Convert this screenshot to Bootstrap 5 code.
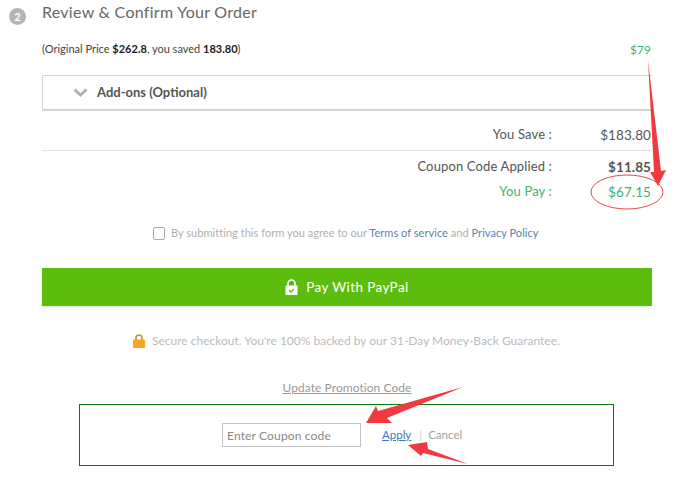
<!DOCTYPE html>
<html lang="en">
<head>
    <meta charset="UTF-8">
    <meta name="viewport" content="width=device-width, initial-scale=1.0">
    <title>Review &amp; Confirm Your Order</title>
    <link href="https://cdn.jsdelivr.net/npm/bootstrap@5.3.3/dist/css/bootstrap.min.css" rel="stylesheet">
    <style>
        body {
            font-family: Lato, "Open Sans", sans-serif;
            background: #fff;
            color: #444;
            overflow: hidden;
            position: relative;
            height: 482px;
        }
        .order-wrap { width: 652px; padding-left: 42px; }
        .step-head { height: 30px; font-size: 16px; letter-spacing: .28px; color: #666; }
        .step-num {
            position: absolute; left: 9px; top: 8px; width: 17px; height: 17px;
            border-radius: 50%; background: #b5b5b5; color: #fff;
            font-size: 11px; font-weight: 700; line-height: 17px; text-align: center;
        }
        .price-note { height: 45px; padding-top: 11px; font-size: 11px; color: #444; }
        .price-note b { color: #222; }
        .price-old { color: #3cb371; font-size: 12px; padding-right: 1px; }
        .addons-box {
            height: 36px; border: 1px solid #d4d4d4; border-bottom-width: 2px; border-right-width: 0;
            padding-left: 30px; gap: 9px; font-size: 13px; font-weight: 700; color: #555;
        }
        .sum-row { font-size: 13px; color: #555; }
        .sum-label { width: 510px; text-align: right; letter-spacing: .14px; }
        .sum-val { width: 99px; text-align: right; font-size: 13.5px; letter-spacing: .1px; }
        .sum-first { height: 40px; padding-top: 14px; border-bottom: 1px solid #e3e3e3; }
        .sum-mid { height: 31px; padding-top: 6px; }
        .sum-last { height: 25px; color: #3cb371; }
        .agree-row { margin-top: 18px; height: 16px; gap: 6px; padding-left: 111px; font-size: 11px; color: #b0b0b0; letter-spacing: .04px; }
        .agree-box { width: 12px; height: 13px; border: 1px solid #aaa; border-radius: 2px; }
        .agree-row a { color: #5a83b0; text-decoration: none; }
        .pay-btn {
            display: block; width: 610px; height: 38px; margin-top: 27px; padding: 0;
            background: #5cbd0f; border: 0; border-radius: 0; color: #fff;
            font-size: 13.5px; font-weight: 400; letter-spacing: .4px;
            box-shadow: 0 1px 2px rgba(0,0,0,.12);
        }
        .pay-btn:hover { background: #5cbd0f; color: #fff; }
        .secure-row { margin-top: 26px; height: 18px; gap: 7px; padding-left: 91px; font-size: 12px; color: #bbb; }
        .promo-link { margin-top: 29px; height: 18px; text-align: center; font-size: 12px; letter-spacing: .05px; }
        .promo-link a { color: #999; }
        .coupon-box { margin: 7px 0 0 37px; width: 535px; height: 62px; border: 1px solid #0a7a0a; padding-left: 142px; font-size: 11.5px; }
        .coupon-input {
            width: 139px; height: 24px; border: 1px solid #c4c4c4; border-radius: 0; padding: 0 4px;
            font-size: 12px; letter-spacing: .15px; font-family: inherit; color: #888;
        }
        .coupon-input::placeholder { color: #888; opacity: 1; }
        .apply-link { margin-left: 21px; color: #3a78c2; }
        .link-sep { margin: 0 6px 0 8px; color: #ccc; }
        .cancel-link { color: #a0a0a0; text-decoration: none; }
        .mark-layer { position: absolute; left: 0; top: 0; pointer-events: none; }
    </style>
</head>
<body>
    <span class="step-num">2</span>
    <div class="order-wrap">
        <div class="step-head">Review &amp; Confirm Your Order</div>
        <div class="price-note d-flex justify-content-between align-items-start">
            <span>(Original Price <b>$262.8</b>, you saved <b>183.80</b>)</span>
            <span class="price-old">$79</span>
        </div>
        <div class="addons-box d-flex align-items-center">
            <svg width="15" height="9" viewBox="0 0 15 9"><path d="M1.500 1.500 7.500 7 13.500 1.500" fill="none" stroke="#b0b0b0" stroke-width="3"/></svg>
            <span>Add-ons (Optional)</span>
        </div>
        <div class="sum-row sum-first d-flex"><span class="sum-label">You Save :</span><span class="sum-val">$183.80</span></div>
        <div class="sum-row sum-mid d-flex"><span class="sum-label">Coupon Code Applied :</span><span class="sum-val"><b>$11.85</b></span></div>
        <div class="sum-row sum-last d-flex"><span class="sum-label">You Pay :</span><span class="sum-val">$67.15</span></div>
        <div class="agree-row d-flex align-items-center">
            <span class="agree-box"></span>
            <span>By submitting this form you agree to our <a href="#">Terms of service</a> and <a href="#">Privacy Policy</a></span>
        </div>
        <button type="button" class="btn pay-btn">
            <svg width="13" height="16" viewBox="0 0 13 16" class="me-1 align-text-bottom"><path d="M3 7V4.500a3.500 3.500 0 0 1 7 0V7" fill="none" stroke="#fff" stroke-width="1.6"/><rect x="0.5" y="6.500" width="12" height="9.500" fill="#fff"/><path d="M4 11l2 2 3-3" fill="none" stroke="#5cbd0f" stroke-width="1.3"/></svg>
            Pay With PayPal
        </button>
        <div class="secure-row d-flex align-items-center">
            <svg width="12" height="14" viewBox="0 0 12 14"><path d="M3 6V4a3 3 0 0 1 6 0v2" fill="none" stroke="#c9902a" stroke-width="1.6"/><rect y="5.500" width="12" height="8.500" rx="1" fill="#f5a623"/></svg>
            <span>Secure checkout. You're 100% backed by our 31-Day Money-Back Guarantee.</span>
        </div>
        <div class="promo-link"><a href="#">Update Promotion Code</a></div>
        <div class="coupon-box d-flex align-items-center">
            <input type="text" class="coupon-input" placeholder="Enter Coupon code">
            <a href="#" class="apply-link">Apply</a>
            <span class="link-sep">|</span>
            <a href="#" class="cancel-link">Cancel</a>
        </div>
    </div>
    <!-- red annotations drawn over the page -->
    <svg class="mark-layer" width="697" height="482" viewBox="0 0 697 482">
        <ellipse cx="627" cy="192" rx="36" ry="17" fill="none" stroke="#e8484c" stroke-width="1"/>
        <path d="M648 60 661 171 666 170 658 186 650 172 654 172Z" fill="#f03a3f"/>
        <path d="M463 387 378 411 376 406 366 423 392 423 387 418Z" fill="#f03a3f"/>
        <path d="M468 464 428 449 427 442 408 445 421 456 423 453Z" fill="#f03a3f"/>
    </svg>
    <script src="https://cdn.jsdelivr.net/npm/bootstrap@5.3.3/dist/js/bootstrap.bundle.min.js"></script>
</body>
</html>
